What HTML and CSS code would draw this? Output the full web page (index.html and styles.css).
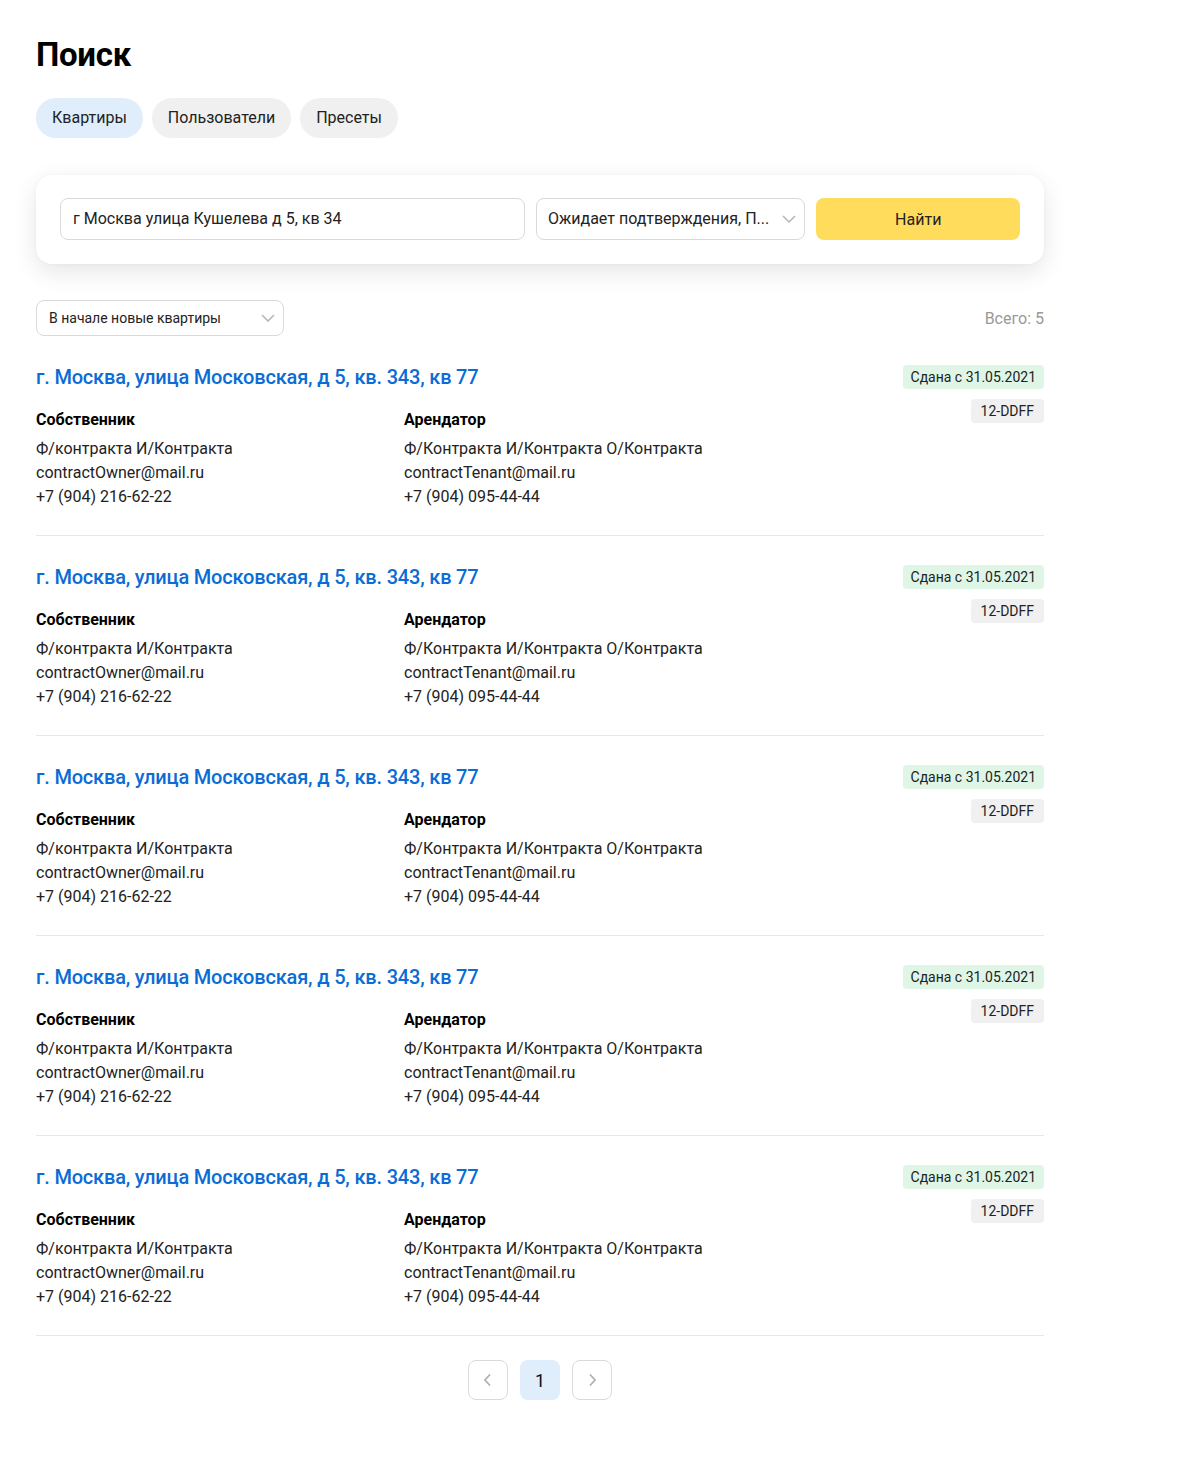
FILE: index.html
```html
<!DOCTYPE html>
<html lang="ru">
<head>
<meta charset="utf-8">
<title>Поиск</title>
<link rel="stylesheet" href="styles.css">
</head>
<body>
<main class="page">
  <h1 class="title">Поиск</h1>
  <nav class="tabs">
    <span class="tab tab-active">Квартиры</span>
    <span class="tab">Пользователи</span>
    <span class="tab">Пресеты</span>
  </nav>

  <section class="search-card">
    <div class="input">г Москва улица Кушелева д 5, кв 34</div>
    <div class="select">
      <span class="select-text">Ожидает подтверждения, П...</span>
      <svg class="chevron" width="14" height="8" viewBox="0 0 14 8"><path d="M1 1l6 6 6-6" fill="none" stroke="#b5b5b5" stroke-width="1.5"/></svg>
    </div>
    <button class="btn-find">Найти</button>
  </section>

  <div class="toolbar">
    <div class="sort">
      <span>В начале новые квартиры</span>
      <svg class="chevron" width="14" height="8" viewBox="0 0 14 8"><path d="M1 1l6 6 6-6" fill="none" stroke="#b5b5b5" stroke-width="1.5"/></svg>
    </div>
    <div class="total">Всего: 5</div>
  </div>

  <div class="list">
    <article class="item">
      <div class="item-main">
        <a class="item-title" href="#">г. Москва, улица Московская, д 5, кв. 343, кв 77</a>
        <div class="people">
          <div class="person">
            <div class="role">Собственник</div>
            <div>Ф/контракта И/Контракта</div>
            <div>contractOwner@mail.ru</div>
            <div>+7 (904) 216-62-22</div>
          </div>
          <div class="person">
            <div class="role">Арендатор</div>
            <div>Ф/Контракта И/Контракта О/Контракта</div>
            <div>contractTenant@mail.ru</div>
            <div>+7 (904) 095-44-44</div>
          </div>
        </div>
      </div>
      <div class="tags">
        <span class="tag tag-green">Сдана с 31.05.2021</span>
        <span class="tag tag-code">12-DDFF</span>
      </div>
    </article>
    <article class="item">
      <div class="item-main">
        <a class="item-title" href="#">г. Москва, улица Московская, д 5, кв. 343, кв 77</a>
        <div class="people">
          <div class="person">
            <div class="role">Собственник</div>
            <div>Ф/контракта И/Контракта</div>
            <div>contractOwner@mail.ru</div>
            <div>+7 (904) 216-62-22</div>
          </div>
          <div class="person">
            <div class="role">Арендатор</div>
            <div>Ф/Контракта И/Контракта О/Контракта</div>
            <div>contractTenant@mail.ru</div>
            <div>+7 (904) 095-44-44</div>
          </div>
        </div>
      </div>
      <div class="tags">
        <span class="tag tag-green">Сдана с 31.05.2021</span>
        <span class="tag tag-code">12-DDFF</span>
      </div>
    </article>
    <article class="item">
      <div class="item-main">
        <a class="item-title" href="#">г. Москва, улица Московская, д 5, кв. 343, кв 77</a>
        <div class="people">
          <div class="person">
            <div class="role">Собственник</div>
            <div>Ф/контракта И/Контракта</div>
            <div>contractOwner@mail.ru</div>
            <div>+7 (904) 216-62-22</div>
          </div>
          <div class="person">
            <div class="role">Арендатор</div>
            <div>Ф/Контракта И/Контракта О/Контракта</div>
            <div>contractTenant@mail.ru</div>
            <div>+7 (904) 095-44-44</div>
          </div>
        </div>
      </div>
      <div class="tags">
        <span class="tag tag-green">Сдана с 31.05.2021</span>
        <span class="tag tag-code">12-DDFF</span>
      </div>
    </article>
    <article class="item">
      <div class="item-main">
        <a class="item-title" href="#">г. Москва, улица Московская, д 5, кв. 343, кв 77</a>
        <div class="people">
          <div class="person">
            <div class="role">Собственник</div>
            <div>Ф/контракта И/Контракта</div>
            <div>contractOwner@mail.ru</div>
            <div>+7 (904) 216-62-22</div>
          </div>
          <div class="person">
            <div class="role">Арендатор</div>
            <div>Ф/Контракта И/Контракта О/Контракта</div>
            <div>contractTenant@mail.ru</div>
            <div>+7 (904) 095-44-44</div>
          </div>
        </div>
      </div>
      <div class="tags">
        <span class="tag tag-green">Сдана с 31.05.2021</span>
        <span class="tag tag-code">12-DDFF</span>
      </div>
    </article>
    <article class="item">
      <div class="item-main">
        <a class="item-title" href="#">г. Москва, улица Московская, д 5, кв. 343, кв 77</a>
        <div class="people">
          <div class="person">
            <div class="role">Собственник</div>
            <div>Ф/контракта И/Контракта</div>
            <div>contractOwner@mail.ru</div>
            <div>+7 (904) 216-62-22</div>
          </div>
          <div class="person">
            <div class="role">Арендатор</div>
            <div>Ф/Контракта И/Контракта О/Контракта</div>
            <div>contractTenant@mail.ru</div>
            <div>+7 (904) 095-44-44</div>
          </div>
        </div>
      </div>
      <div class="tags">
        <span class="tag tag-green">Сдана с 31.05.2021</span>
        <span class="tag tag-code">12-DDFF</span>
      </div>
    </article>
  </div>

  <nav class="pagination">
    <span class="page-btn page-arrow">
      <svg width="10" height="14" viewBox="0 0 10 14"><path d="M7 1.5L2 7l5 5.5" fill="none" stroke="#b0b0b0" stroke-width="1.8"/></svg>
    </span>
    <span class="page-btn page-current">1</span>
    <span class="page-btn page-arrow">
      <svg width="10" height="14" viewBox="0 0 10 14"><path d="M3 1.5L8 7l-5 5.5" fill="none" stroke="#b0b0b0" stroke-width="1.8"/></svg>
    </span>
  </nav>
</main>
</body>
</html>
```

FILE: styles.css
```css
* { box-sizing: border-box; }
body {
  margin: 0;
  background: #fff;
  font-family: Roboto, "Noto Sans", Arial, sans-serif;
  color: #000;
  font-size: 16px;
}
.page {
  width: 1008px;
  margin-left: 36px;
  padding-top: 35px;
  padding-bottom: 60px;
}
.title {
  margin: 0;
  font-size: 33px;
  line-height: 40px;
  font-weight: 700;
  letter-spacing: -0.3px;
}
.tabs {
  display: flex;
  gap: 9px;
  margin-top: 23px;
}
.tab {
  height: 40px;
  line-height: 40px;
  padding: 0 16px;
  border-radius: 20px;
  background: #f0f0f0;
  font-size: 16px;
  color: #222;
}
.tab-active { background: #e0edfb; }

.search-card {
  margin-top: 37px;
  background: #fff;
  border-radius: 16px;
  box-shadow: 0 8px 24px rgba(0, 0, 0, 0.10), 0 0 4px rgba(0,0,0,0.03);
  padding: 23px 24px 24px 24px;
  display: flex;
  gap: 11px;
}
.input, .select {
  height: 42px;
  border: 1px solid #d9d9d9;
  border-radius: 8px;
  font-size: 16px;
  line-height: 40px;
  color: #222;
}
.input {
  width: 466px;
  padding: 0 12px;
}
.select {
  width: 270px;
  padding: 0 8px 0 11px;
  display: flex;
  align-items: center;
  justify-content: space-between;
}
.chevron { flex: none; }
.btn-find {
  width: 204px;
  height: 42px;
  border: 0;
  border-radius: 8px;
  background: #ffdc5c;
  font-family: inherit;
  font-size: 16px;
  color: #222;
}

.toolbar {
  margin-top: 36px;
  display: flex;
  justify-content: space-between;
  align-items: center;
}
.sort {
  width: 248px;
  height: 36px;
  border: 1px solid #d9d9d9;
  border-radius: 8px;
  padding: 0 8px 0 12px;
  display: flex;
  align-items: center;
  justify-content: space-between;
  font-size: 14px;
  color: #222;
}
.total {
  font-size: 16px;
  color: #999;
}

.list { margin-top: 29px; }
.item {
  display: flex;
  justify-content: space-between;
  border-bottom: 1px solid #e8e8e8;
  padding-bottom: 26px;
  margin-bottom: 29px;
}
.item-main { flex: 1; }
.item-title {
  display: block;
  font-size: 20px;
  line-height: 24px;
  font-weight: 500;
  letter-spacing: -0.18px;
  color: #0b6cd6;
  text-decoration: none;
}
.people {
  display: grid;
  grid-template-columns: 368px 1fr;
  margin-top: 19px;
  font-size: 16px;
  line-height: 24px;
  color: #222;
}
.role {
  font-weight: 700;
  color: #000;
  margin-bottom: 5px;
}
.tags {
  display: flex;
  flex-direction: column;
  align-items: flex-end;
  gap: 10px;
}
.tag {
  height: 24px;
  line-height: 24px;
  padding: 0 8px;
  border-radius: 4px;
  background: #f0f0f0;
  font-size: 14px;
  color: #222;
}
.tag-code { padding: 0 10px; }
.tag-green { background: #dff5e6; }

.pagination {
  display: flex;
  justify-content: center;
  gap: 12px;
  margin-top: -5px;
}
.page-btn {
  width: 40px;
  height: 40px;
  border-radius: 8px;
  display: flex;
  align-items: center;
  justify-content: center;
  font-size: 18px;
}
.page-arrow { border: 1px solid #d9d9d9; }
.page-current { background: #e0edfb; color: #111; }
```
